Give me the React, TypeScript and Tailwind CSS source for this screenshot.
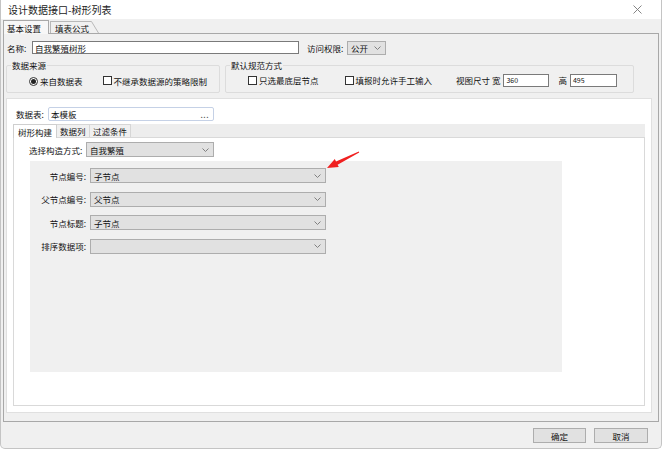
import React from "react";

function Chevron() {
  return (
    <svg width="7" height="4" viewBox="0 0 7 4" className="shrink-0">
      <path d="M0.5 0.5 L3.5 3.5 L6.5 0.5" fill="none" stroke="#808080" strokeWidth="1" />
    </svg>
  );
}

function GraySelect({ text, className }: { text: string; className: string }) {
  return (
    <div className={"flex items-center justify-between border border-[#adadad] bg-[#e1e1e1] pl-[3px] pr-[4px] " + className}>
      <span>{text}</span>
      <Chevron />
    </div>
  );
}

function CheckBox() {
  return <span className="inline-block w-[9px] h-[9px] border border-[#333333] bg-white shrink-0" />;
}

export default function App() {
  return (
    <div className="relative w-[662px] h-[449px] bg-[#f0f0f0] border-x border-b border-[#c4c4c4] rounded-b-[5px] flex flex-col overflow-hidden text-[8.5px] leading-[10px] text-[#111] font-['Noto_Sans_CJK_SC',sans-serif]">
      {/* title bar */}
      <div className="h-[19px] bg-white flex items-center justify-between pl-[7px] pr-[19px] shrink-0">
        <span className="text-[10px] leading-[12px] text-[#222]">设计数据接口-树形列表</span>
        <svg width="9" height="9" viewBox="0 0 9 9">
          <path d="M0.5 0.5 L8.5 8.5 M8.5 0.5 L0.5 8.5" stroke="#777" strokeWidth="0.9" />
        </svg>
      </div>

      {/* top tabs */}
      <div className="h-[14px] flex items-end pl-[2px] shrink-0">
        <div className="w-[46px] h-[14px] border border-b-0 border-[#a8a8a8] bg-[#f7f7f7] flex items-center pl-[3px] relative z-10 -mb-px">
          基本设置
        </div>
        <div className="flex items-end h-[12px] ml-px">
          <div className="h-[12px] border-t border-l border-[#b8b8b8] flex items-center pl-[4px] pr-[1px]">填表公式</div>
          <svg width="9" height="12" viewBox="0 0 9 12" className="block">
            <path d="M0 0.5 L1.5 0.5 L8.5 12" fill="none" stroke="#b8b8b8" strokeWidth="1" />
          </svg>
        </div>
      </div>

      {/* tab page */}
      <div className="ml-[2px] w-[656px] h-[389px] border border-[#a8a8a8] bg-[#f0f0f0] flex flex-col shrink-0">
        {/* name row */}
        <div className="mt-[7px] h-[13px] flex items-center">
          <span className="ml-[3px] w-[25px]">名称:</span>
          <div className="w-[267px] h-[13px] border border-[#7a7a7a] bg-white flex items-center pl-[2px]">自我繁殖树形</div>
          <span className="ml-[8px] w-[40px]">访问权限:</span>
          <GraySelect text="公开" className="w-[39px] h-[14px]" />
        </div>

        {/* groups */}
        <div className="mt-[6px] flex">
          <fieldset className="ml-[2px] w-[214px] h-[33px] border border-[#dcdcdc] rounded-[2px] px-[4px]">
            <legend className="px-[1px] leading-[10px]">数据来源</legend>
            <div className="mt-[6px] flex items-center h-[10px]">
              <span className="ml-[18px] w-[9px] h-[9px] rounded-full border border-[#333] bg-white flex items-center justify-center shrink-0">
                <span className="w-[5px] h-[5px] rounded-full bg-[#222]" />
              </span>
              <span className="ml-[2px]">来自数据表</span>
              <span className="ml-[20px]"><CheckBox /></span>
              <span className="ml-[2px]">不继承数据源的策略限制</span>
            </div>
          </fieldset>
          <fieldset className="ml-[5px] w-[409px] h-[33px] border border-[#dcdcdc] rounded-[2px] px-[4px]">
            <legend className="px-[1px] leading-[10px]">默认规范方式</legend>
            <div className="mt-[3px] flex items-center h-[14px]">
              <span className="ml-[18px] flex"><CheckBox /></span>
              <span className="ml-[2px]">只选最底层节点</span>
              <span className="ml-[26px] flex"><CheckBox /></span>
              <span className="ml-[2px]">填报时允许手工输入</span>
              <span className="ml-[24px]">视图尺寸 宽</span>
              <div className="ml-[3px] w-[46px] h-[13px] border border-[#7a7a7a] bg-white flex items-center pl-[2px] text-[7px]">360</div>
              <span className="ml-[9px]">高</span>
              <div className="ml-[3px] w-[47px] h-[13px] border border-[#7a7a7a] bg-white flex items-center pl-[2px] text-[7px]">495</div>
            </div>
          </fieldset>
        </div>

        {/* white panel */}
        <div className="mt-[5px] ml-[2px] w-[646px] h-[315px] bg-white border border-[#e0e0e0] flex flex-col">
          <div className="mt-[8px] h-[14px] flex items-center">
            <span className="ml-[9px] w-[32px]">数据表:</span>
            <div className="w-[166px] h-[14px] border border-[#c5d1e6] rounded-[2px] bg-white flex items-center justify-between pl-[2px] pr-[4px]">
              <span>本模板</span>
              <span className="text-[#555] tracking-[0.5px]">...</span>
            </div>
          </div>

          {/* sub tabs */}
          <div className="mt-[3px] ml-[6px] w-[632px] h-[13px] bg-[#ededed] flex items-end">
            <div className="w-[44px] h-[14px] bg-white border border-b-0 border-[#cfcfcf] flex items-center pl-[4px] relative z-10 -mb-px">树形构建</div>
            <div className="w-[33px] h-[13px] border-t border-r border-[#d6d6d6] bg-[#f0f0f0] flex items-center pl-[3px]">数据列</div>
            <div className="w-[41px] h-[13px] border-t border-r border-[#d6d6d6] bg-[#f0f0f0] flex items-center pl-[3px]">过滤条件</div>
          </div>

          {/* sub content */}
          <div className="ml-[6px] w-[632px] h-[269px] bg-white border border-[#d9d9d9] flex flex-col">
            <div className="mt-[4px] h-[15px] flex items-center">
              <span className="ml-[15px] w-[57px]">选择构造方式:</span>
              <GraySelect text="自我繁殖" className="w-[128px] h-[15px]" />
            </div>
            <div className="mt-[4px] ml-[16px] w-[532px] h-[211px] bg-[#f0f0f0] flex flex-col gap-[8.5px] pt-[7px]">
              {[
                ["节点编号:", "子节点"],
                ["父节点编号:", "父节点"],
                ["节点标题:", "子节点"],
                ["排序数据项:", ""],
              ].map(([l, v]) => (
                <div key={l} className="flex items-center h-[15px]">
                  <span className="w-[57px] text-right pr-[1px]">{l}</span>
                  <GraySelect text={v} className="ml-[3px] w-[236px] h-[15px]" />
                </div>
              ))}
            </div>
          </div>
        </div>
      </div>

      {/* bottom buttons */}
      <div className="flex justify-end pr-[13px] pt-[6px] gap-[8px]">
        <div className="w-[53px] h-[15px] border border-[#adadad] bg-[#e1e1e1] flex items-center justify-center">确定</div>
        <div className="w-[54px] h-[15px] border border-[#adadad] bg-[#e1e1e1] flex items-center justify-center">取消</div>
      </div>

      {/* red annotation arrow */}
      <svg className="absolute left-[319px] top-[147px]" width="45" height="25" viewBox="320 148 45 25">
        <polygon
          points="327,169 338.8,168.1 337.6,165.7 359.2,153.4 358.8,152.6 336,162.5 334.8,160.1"
          fill="#f02020"
        />
      </svg>
    </div>
  );
}
